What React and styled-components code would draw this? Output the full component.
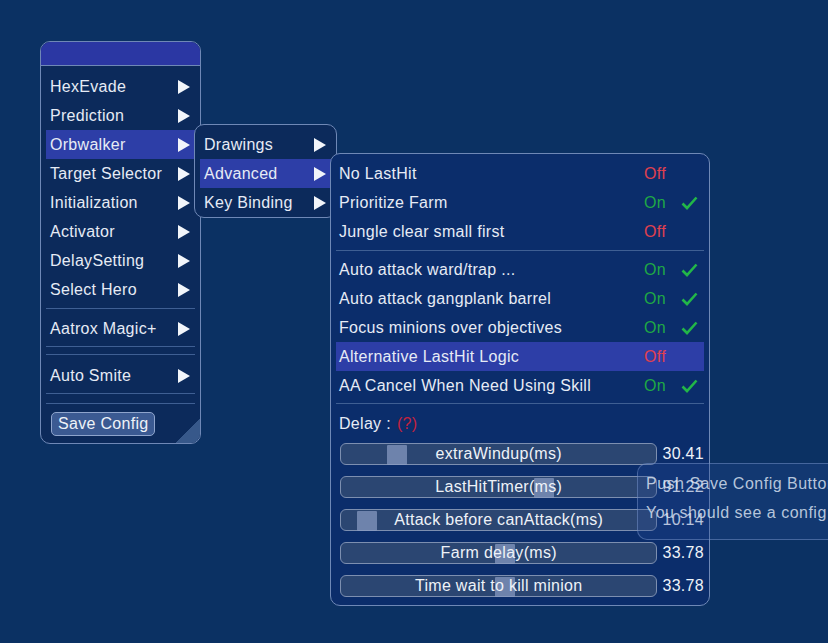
import React from 'react'
import styled, { createGlobalStyle } from 'styled-components'

const GlobalStyle = createGlobalStyle`
  html, body {
    margin: 0;
    padding: 0;
    background: #0b3163;
  }
  body {
    width: 828px;
    height: 643px;
    overflow: hidden;
    font-family: 'Liberation Sans', Arial, sans-serif;
    color: #e6ebf5;
  }
`

const mainItems = [
  'HexEvade',
  'Prediction',
  'Orbwalker',
  'Target Selector',
  'Initialization',
  'Activator',
  'DelaySetting',
  'Select Hero',
]

const toggles = [
  [
    { label: 'No LastHit', on: false },
    { label: 'Prioritize Farm', on: true },
    { label: 'Jungle clear small first', on: false },
  ],
  [
    { label: 'Auto attack ward/trap ...', on: true },
    { label: 'Auto attack gangplank barrel', on: true },
    { label: 'Focus minions over objectives', on: true },
    { label: 'Alternative LastHit Logic', on: false, active: true },
    { label: 'AA Cancel When Need Using Skill', on: true },
  ],
]

const sliders = [
  { label: 'extraWindup(ms)', value: '30.41', pos: 46 },
  { label: 'LastHitTimer(ms)', value: '91.22', pos: 193 },
  { label: 'Attack before canAttack(ms)', value: '10.14', pos: 16 },
  { label: 'Farm delay(ms)', value: '33.78', pos: 154 },
  { label: 'Time wait to kill minion', value: '33.78', pos: 154 },
]

const Screen = styled.div`
  position: relative;
  width: 828px;
  height: 643px;
`

const Window = styled.div`
  position: absolute;
  left: ${(p) => p.x}px;
  top: ${(p) => p.y}px;
  width: ${(p) => p.w}px;
  box-sizing: border-box;
  background: ${(p) => p.bg || '#0c2a5b'};
  border: 1px solid #6f88b6;
  border-radius: 10px;
  padding: ${(p) => p.pad || '0 5px'};
  display: flex;
  flex-direction: column;
  overflow: hidden;
`

const Header = styled.div`
  height: 23px;
  margin: 0 -5px 6px;
  background: #2b37a3;
  border-bottom: 1px solid #6f88b6;
`

const Row = styled.div`
  height: 29px;
  display: flex;
  align-items: center;
  padding: 0 5px 0 ${(p) => p.indent || 4}px;
  font-size: 16px;
  letter-spacing: 0.3px;
  background: ${(p) => (p.active ? '#2d3ea7' : 'transparent')};
  white-space: nowrap;
`

const Label = styled.span`
  flex: 1;
`

const Arrow = styled.span`
  width: 0;
  height: 0;
  border-top: 7px solid transparent;
  border-bottom: 7px solid transparent;
  border-left: 12px solid #f2f5fa;
`

const Rule = styled.div`
  flex: none;
  height: 1px;
  background: #3f5f93;
  margin: ${(p) => p.m || '4px 0'};
`

const SaveButton = styled.button`
  align-self: flex-start;
  margin: 8px 0 0 5px;
  height: 24px;
  padding: 0 6px;
  font-family: inherit;
  font-size: 16px;
  letter-spacing: 0.3px;
  color: #eef2f8;
  background: #3b5a92;
  border: 1px solid #8ea4cc;
  border-radius: 5px;
`

const Grip = styled.div`
  position: absolute;
  right: 0;
  bottom: 0;
  width: 26px;
  height: 24px;
  background: linear-gradient(135deg, transparent 50%, #37588a 50%);
`

const State = styled.span`
  width: 37px;
  color: ${(p) => (p.on ? '#1fa845' : '#e0404f')};
`

const CheckBox = styled.span`
  width: 18px;
  display: flex;
  align-items: center;
`

const DelayLabel = styled.div`
  height: 29px;
  display: flex;
  align-items: center;
  padding-left: 3px;
  font-size: 16px;
  letter-spacing: 0.3px;
  gap: 6px;
`

const Hint = styled.span`
  color: #c4223e;
`

const SliderList = styled.div`
  display: flex;
  flex-direction: column;
  gap: 11px;
  margin-top: 5px;
`

const SliderRow = styled.div`
  display: flex;
  align-items: center;
  gap: 5px;
  padding-left: 4px;
  font-size: 16px;
  letter-spacing: 0.3px;
`

const Track = styled.div`
  position: relative;
  width: 318px;
  height: 22px;
  box-sizing: border-box;
  background: #2b4672;
  border: 1px solid #7d8fb0;
  border-radius: 6px;
  display: flex;
  align-items: center;
  justify-content: center;
`

const Thumb = styled.span`
  position: absolute;
  top: 1px;
  width: 20px;
  height: 20px;
  background: rgba(140, 156, 196, 0.7);
  border-radius: 1px;
`

const TrackText = styled.span`
  position: relative;
  color: #eef2f8;
`

const Value = styled.span`
  color: #eef2f8;
`

const Tooltip = styled.div`
  position: absolute;
  left: 637px;
  top: 463px;
  width: 230px;
  height: 77px;
  box-sizing: border-box;
  padding: 5px 8px;
  border: 1px solid rgba(130, 160, 210, 0.45);
  border-radius: 10px;
  background: rgba(40, 75, 150, 0.28);
  color: rgba(222, 230, 244, 0.82);
  font-size: 16px;
  letter-spacing: 0.5px;
  line-height: 29px;
  white-space: nowrap;
`

const Check = () => (
  <svg width='17' height='14' viewBox='0 0 17 14'>
    <path d='M1.5 7.5 L6 12 L15.5 1.5' fill='none' stroke='#22b648' strokeWidth='2.6' />
  </svg>
)

export default function App() {
  return (
    <Screen>
      <GlobalStyle />

      {/* main menu */}
      <Window x={40} y={41} w={161} style={{ height: 403 }}>
        <Header />
        {mainItems.map((item) => (
          <Row key={item} active={item === 'Orbwalker'}>
            <Label>{item}</Label>
            <Arrow />
          </Row>
        ))}
        <Rule m='4px 0 5px' />
        <Row>
          <Label>Aatrox Magic+</Label>
          <Arrow />
        </Row>
        <Rule m='3px 0 0' />
        <Rule m='7px 0 6px' />
        <Row>
          <Label>Auto Smite</Label>
          <Arrow />
        </Row>
        <Rule m='3px 0 0' />
        <Rule m='9px 0 0' />
        <SaveButton>Save Config</SaveButton>
        <Grip />
      </Window>

      {/* orbwalker submenu */}
      <Window x={194} y={124} w={143} pad='5px 5px 0'>
        <Row>
          <Label>Drawings</Label>
          <Arrow />
        </Row>
        <Row active>
          <Label>Advanced</Label>
          <Arrow />
        </Row>
        <Row>
          <Label>Key Binding</Label>
          <Arrow />
        </Row>
      </Window>

      {/* advanced panel */}
      <Window x={330} y={153} w={380} bg='#0b2d6b' pad='5px 5px 8px'>
        {toggles.map((group, gi) => (
          <React.Fragment key={gi}>
            {gi > 0 && <Rule m='4px 0 4px' />}
            {group.map((t) => (
              <Row key={t.label} active={t.active} indent={3}>
                <Label>{t.label}</Label>
                <State on={t.on}>{t.on ? 'On' : 'Off'}</State>
                <CheckBox>{t.on && <Check />}</CheckBox>
              </Row>
            ))}
          </React.Fragment>
        ))}
        <Rule m='3px 0 5px' />
        <DelayLabel>
          Delay : <Hint>(?)</Hint>
        </DelayLabel>
        <SliderList>
          {sliders.map((s) => (
            <SliderRow key={s.label}>
              <Track>
                <Thumb style={{ left: s.pos }} />
                <TrackText>{s.label}</TrackText>
              </Track>
              <Value>{s.value}</Value>
            </SliderRow>
          ))}
        </SliderList>
      </Window>

      <Tooltip>
        Push Save Config Button
        <br />
        You should see a config
      </Tooltip>
    </Screen>
  )
}
